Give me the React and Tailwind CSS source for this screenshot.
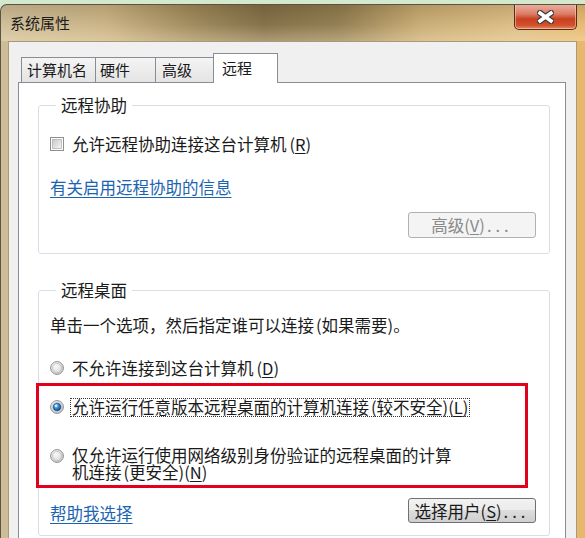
import React from "react";

function Radio({ checked }) {
  return (
    <svg width="14" height="14" viewBox="0 0 14 14" className="shrink-0">
      <defs>
        <radialGradient id="rbOuter" cx="35%" cy="30%" r="75%">
          <stop offset="0%" stopColor="#ffffff" />
          <stop offset="100%" stopColor="#c9c9c9" />
        </radialGradient>
        <radialGradient id="rbInner" cx="40%" cy="35%" r="70%">
          <stop offset="0%" stopColor="#fafafa" />
          <stop offset="100%" stopColor="#d8d8d8" />
        </radialGradient>
        <radialGradient id="rbDot" cx="40%" cy="35%" r="70%">
          <stop offset="0%" stopColor="#9fe0ff" />
          <stop offset="45%" stopColor="#2d8fd8" />
          <stop offset="100%" stopColor="#0d3f86" />
        </radialGradient>
      </defs>
      <circle cx="7" cy="7" r="6.4" fill="url(#rbOuter)" stroke="#8d8f91" strokeWidth="1" />
      <circle cx="7" cy="7" r="4.6" fill="url(#rbInner)" stroke="#b9bbbd" strokeWidth="0.6" />
      {checked && (
        <>
          <circle cx="7" cy="7" r="3.8" fill="url(#rbDot)" stroke="#1c3f6e" strokeWidth="0.6" />
          <circle cx="6" cy="5.8" r="1.2" fill="#e6f7ff" opacity="0.85" />
        </>
      )}
    </svg>
  );
}

function Checkbox() {
  return (
    <svg width="14" height="14" viewBox="0 0 14 14" className="shrink-0">
      <defs>
        <linearGradient id="cbIn" x1="0" y1="0" x2="1" y2="1">
          <stop offset="0%" stopColor="#c5c8cc" />
          <stop offset="100%" stopColor="#f7f7f7" />
        </linearGradient>
      </defs>
      <rect x="0.5" y="0.5" width="13" height="13" fill="#fdfdfd" stroke="#8e8f8f" />
      <rect x="2.5" y="2.5" width="9" height="9" fill="url(#cbIn)" stroke="#b4b7ba" strokeWidth="0.8" />
    </svg>
  );
}

function CloseX() {
  return (
    <svg width="17" height="14" viewBox="0 0 17 14">
      <g strokeLinecap="square">
        <line x1="3" y1="3" x2="14" y2="11" stroke="#3b3b3b" strokeWidth="6" />
        <line x1="14" y1="3" x2="3" y2="11" stroke="#3b3b3b" strokeWidth="6" />
        <line x1="3" y1="3" x2="14" y2="11" stroke="#ffffff" strokeWidth="3.6" />
        <line x1="14" y1="3" x2="3" y2="11" stroke="#ffffff" strokeWidth="3.6" />
      </g>
    </svg>
  );
}

function U({ children }) {
  return <span className="underline underline-offset-[2px]">{children}</span>;
}

export default function App() {
  return (
    <div className="w-[585px] h-[538px] overflow-hidden bg-[#d3e8cc] pt-[4px] font-['Noto_Sans_CJK_SC','Noto_Sans',sans-serif] text-[#1a1a1a]">
      <div className="h-[534px] rounded-tl-[7px] border-t border-l border-[#5b5344] bg-[linear-gradient(90deg,#cdbd98_0%,#c9b283_18%,#9c8658_33%,#7f6b44_45%,#8f7a4d_58%,#c8aa72_72%,#dcbc82_88%,#e7b86c_100%)] flex flex-col overflow-hidden">
        <div className="shrink-0 h-[36px] flex items-start justify-between pl-[9px] pr-[8px] bg-[linear-gradient(180deg,rgba(60,45,20,0.15)_0%,rgba(255,245,220,0.05)_55%,rgba(255,240,205,0.35)_100%)]">
          <span className="mt-[8px] text-[15px] leading-[20px] text-[#1c1c1c]">系统属性</span>
          <div className="-mt-px w-[63px] h-[26px] rounded-b-[5px] border border-t-0 border-[#5a2a1e] bg-[linear-gradient(180deg,#eab3a4_0%,#dc7d66_40%,#c8401f_60%,#d2502d_85%,#e58f60_100%)] flex items-center justify-center shadow-[inset_0_0_0_1px_rgba(255,220,200,0.5)]">
            <CloseX />
          </div>
        </div>
        <div className="flex-1 min-h-0 overflow-hidden ml-[7px] mr-[8px] bg-[#f0f0f0] border border-b-0 border-[#a8997a] pt-[11px] pl-[9px] pr-[10px]">
          <div className="flex items-end h-[29px] pl-[3px] relative z-10 text-[15px] leading-[20px]">
            <div className="w-[74px] h-[25px] border-l border-t border-[#898c95] bg-[linear-gradient(180deg,#f4f4f4_0%,#e4e4e4_100%)] flex items-center pl-[5px]">计算机名</div>
            <div className="w-[60px] h-[25px] border-l border-t border-[#898c95] bg-[linear-gradient(180deg,#f4f4f4_0%,#e4e4e4_100%)] flex items-center pl-[4px]">硬件</div>
            <div className="w-[58px] h-[25px] border-l border-t border-[#898c95] bg-[linear-gradient(180deg,#f4f4f4_0%,#e4e4e4_100%)] flex items-center pl-[6px]">高级</div>
            <div className="w-[65px] h-[30px] -mb-px border-l border-t border-r border-[#898c95] bg-white flex items-center pl-[8px] pb-[2px]">远程</div>
          </div>
          <div className="h-[470px] bg-white border border-[#898c95] pt-[12px] pl-[19px] pr-[15px] text-[16.5px] leading-[20px]">
            <fieldset className="border border-[#d5dfe5] rounded-[3px] pl-[11px] pr-[13px] pb-[15px]">
              <legend className="ml-[6px] px-[5px] leading-[20px]">远程协助</legend>
              <div className="mt-[19px] h-[20px] flex items-center gap-[8px]">
                <Checkbox />
                <span>
                  允许远程协助连接这台计算机<span className="ml-[3px]">(<U>R</U>)</span>
                </span>
              </div>
              <div className="mt-[23px] h-[20px] flex items-center">
                <span className="text-[#1a64b2] underline underline-offset-[3px]">有关启用远程协助的信息</span>
              </div>
              <div className="mt-[15px] flex justify-end">
                <div className="w-[128px] h-[26px] rounded-[3px] border border-[#adb2b5] bg-[#f4f4f4] text-[#8a8a8a] flex items-center justify-center">
                  高级(<U>V</U>)<span className="tracking-[4px] ml-[2px]">...</span>
                </div>
              </div>
            </fieldset>

            <fieldset className="mt-[26px] border border-[#d5dfe5] rounded-[3px] pl-[11px] pr-[13px] pb-[12px]">
              <legend className="ml-[6px] px-[5px] leading-[20px]">远程桌面</legend>
              <div className="mt-[15px] h-[20px] flex items-center">
                单击一个选项，然后指定谁可以连接<span className="ml-[2px]">(如果需要)。</span>
              </div>
              <div className="mt-[23px] h-[20px] flex items-center gap-[8px]">
                <Radio />
                <span>
                  不允许连接到这台计算机<span className="ml-[3px]">(<U>D</U>)</span>
                </span>
              </div>
              <div className="mt-[5px] -ml-[14px] w-[492px] border-[3px] border-[#e3001a] pl-[11px] pt-[11px] pb-[4px]">
                <div className="h-[20px] flex items-center gap-[6px]">
                  <Radio checked />
                  <span className="border border-dotted border-[#333] leading-[17px] px-px">
                    允许运行任意版本远程桌面的计算机连接<span className="ml-[2px]">(较不安全)</span><span>(<U>L</U>)</span>
                  </span>
                </div>
                <div className="mt-[30px] flex items-start gap-[8px]">
                  <div className="mt-[2px]">
                    <Radio />
                  </div>
                  <div className="leading-[17px]">
                    <div>仅允许运行使用网络级别身份验证的远程桌面的计算</div>
                    <div>
                      机连接<span className="ml-[2px]">(更安全)</span>(<U>N</U>)
                    </div>
                  </div>
                </div>
              </div>
              <div className="mt-[10px] flex items-center justify-between">
                <span className="text-[#1a64b2] underline underline-offset-[3px] mt-[4px]">帮助我选择</span>
                <div className="w-[128px] h-[25px] rounded-[3px] border border-[#707070] bg-[linear-gradient(180deg,#f2f2f2_0%,#ebebeb_50%,#dddddd_50%,#cfcfcf_100%)] flex items-center justify-center">
                  选择用户(<U>S</U>)<span className="tracking-[4px] ml-[2px]">...</span>
                </div>
              </div>
            </fieldset>
          </div>
        </div>
      </div>
    </div>
  );
}
